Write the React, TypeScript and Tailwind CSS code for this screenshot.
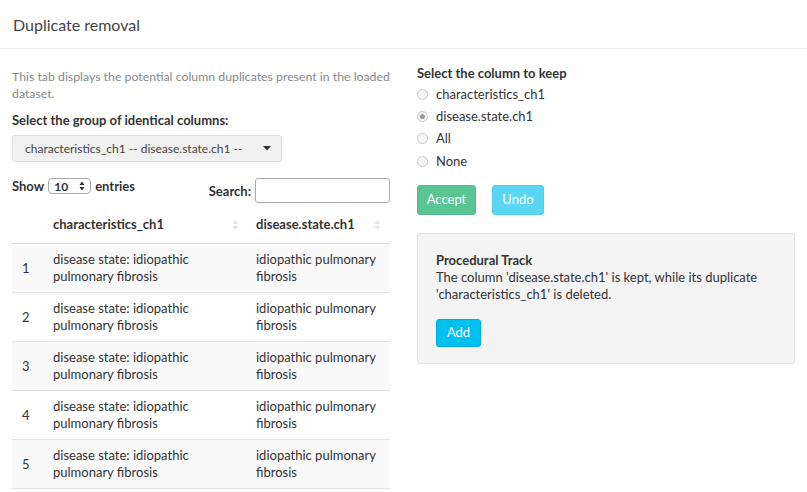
import { useState } from "react";

const rows = [1, 2, 3, 4, 5];

const radioOptions = ["characteristics_ch1", "disease.state.ch1", "All", "None"];

function SortIcon() {
  return (
    <svg width="7" height="12" viewBox="0 0 7 12" className="shrink-0">
      <path d="M3.5 1 L6.5 5 L0.5 5 Z" fill="#e3e3e3" />
      <path d="M3.5 11 L6.5 7 L0.5 7 Z" fill="#e3e3e3" />
    </svg>
  );
}

export default function App() {
  const [keep, setKeep] = useState("disease.state.ch1");

  return (
    <div className="w-[807px] h-[492px] overflow-hidden bg-white text-[#333] font-['Lato','Open_Sans',sans-serif] text-[13px] leading-[17px]">
      <div className="h-[49px] border-b border-[#f0f0f0] flex items-center px-[13px]">
        <h1 className="text-[16px] text-[#444]">Duplicate removal</h1>
      </div>

      <div className="flex gap-[27px] px-3">
        {/* left column */}
        <div className="w-[378px] pt-[19px]">
          <p className="text-[#888] text-[12.3px] whitespace-nowrap">
            This tab displays the potential column duplicates present in the loaded
            <br />
            dataset.
          </p>
          <div className="mt-[10px] font-bold">Select the group of identical columns:</div>
          <div className="mt-[6px] w-[270px] h-[27px] bg-[#f1f1f1] border border-[#ddd] rounded-[3px] flex items-center pl-3 pr-[10px] text-[#444] text-[12px]">
            <span>characteristics_ch1 -- disease.state.ch1 --</span>
            <svg width="8" height="5" viewBox="0 0 8 5" className="ml-auto">
              <path d="M0 0 L8 0 L4 4.5 Z" fill="#333" />
            </svg>
          </div>

          <div className="mt-4 flex justify-between">
            <div className="flex items-center gap-1 font-bold h-4">
              <span>Show</span>
              <div className="w-[43px] h-[16px] border border-[#aaa] rounded-[4px] flex items-center justify-between px-[5px] text-[12px]">
                <span>10</span>
                <svg width="6" height="10" viewBox="0 0 6 10">
                  <path d="M3 0.5 L5.5 4 L0.5 4 Z" fill="#333" />
                  <path d="M3 9.5 L5.5 6 L0.5 6 Z" fill="#333" />
                </svg>
              </div>
              <span>entries</span>
            </div>
            <div className="flex items-end gap-1 font-bold">
              <span className="pb-[3px]">Search:</span>
              <input className="w-[135px] h-[25px] border border-[#aaa] rounded-[3px] bg-white outline-none" />
            </div>
          </div>

          <table className="w-full border-collapse">
            <thead>
              <tr className="border-b border-[#ddd] font-bold">
                <th className="w-[31px]"></th>
                <th className="pl-[10px] pr-[7px] pt-[13px] pb-[10px] text-left w-[203px]">
                  <div className="flex items-center justify-between">
                    <span>characteristics_ch1</span>
                    <SortIcon />
                  </div>
                </th>
                <th className="pl-[10px] pr-[9px] pt-[13px] pb-[10px] text-left">
                  <div className="flex items-center justify-between">
                    <span>disease.state.ch1</span>
                    <SortIcon />
                  </div>
                </th>
              </tr>
            </thead>
            <tbody>
              {rows.map((n) => (
                <tr key={n} className={"border-b border-[#e2e2e2] " + (n % 2 === 1 ? "bg-[#f9f9f9]" : "bg-white")}>
                  <td className="pl-[10px] py-[7px] align-middle">{n}</td>
                  <td className="pl-[10px] py-[7px]">
                    disease state: idiopathic
                    <br />
                    pulmonary fibrosis
                  </td>
                  <td className="pl-[10px] py-[7px]">
                    idiopathic pulmonary
                    <br />
                    fibrosis
                  </td>
                </tr>
              ))}
            </tbody>
          </table>
        </div>

        {/* right column */}
        <div className="w-[378px] pt-[16px]">
          <div className="font-bold">Select the column to keep</div>
          <div className="mt-px flex flex-col">
            {radioOptions.map((opt) => (
              <label key={opt} className="flex items-center h-[22.4px] gap-[8px] cursor-pointer" onClick={() => setKeep(opt)}>
                <span className="w-[11px] h-[11px] rounded-full border border-[#c8c8c8] bg-[#f6f6f6] flex items-center justify-center">
                  {keep === opt && <span className="w-[5px] h-[5px] rounded-full bg-[#9a9a9a]" />}
                </span>
                <span>{opt}</span>
              </label>
            ))}
          </div>

          <div className="mt-[12px] flex gap-[16px]">
            <button className="w-[59px] h-[30px] rounded-[3px] bg-[#59c593] text-white border border-[#52bb88]">Accept</button>
            <button className="w-[52px] h-[30px] rounded-[3px] bg-[#59d6f4] text-white border border-[#52cdea]">Undo</button>
          </div>

          <div className="mt-[18px] h-[131px] bg-[#f4f4f4] border border-[#e3e3e3] rounded-[3px] pl-[18px] pt-[18px]">
            <div className="font-bold">Procedural Track</div>
            <p>
              The column 'disease.state.ch1' is kept, while its duplicate
              <br />
              'characteristics_ch1' is deleted.
            </p>
            <button className="mt-[16px] w-[45px] h-[28px] rounded-[3px] bg-[#00c0ef] border border-[#00acd6] text-white">Add</button>
          </div>
        </div>
      </div>
    </div>
  );
}
